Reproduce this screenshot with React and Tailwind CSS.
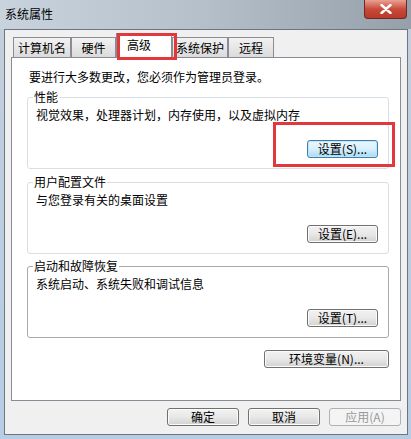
import React from 'react';

const font = "font-['Noto_Sans_CJK_SC','Noto_Sans',sans-serif]";

const Btn = ({ children, className = '', focus = false, disabled = false }) => {
    const base = "h-[18px] flex items-center justify-center rounded-[3px] border text-[12px] leading-none";
    const look = disabled
        ? "border-[#adb2b5] bg-[#f4f4f4] text-[#9a9a9a]"
        : focus
            ? "border-[#3c7fb1] bg-gradient-to-b from-[#eaf6fd] via-[#d9f0fc] to-[#a7d9f5] text-black shadow-[inset_0_0_0_1px_#c4e5f6]"
            : "border-[#707070] bg-gradient-to-b from-[#f2f2f2] via-[#e8e8e8] to-[#d2d2d2] text-black shadow-[inset_0_0_0_1px_#fbfbfb]";
    return <div className={`${base} ${look} ${className}`}>{children}</div>;
};

const Group = ({ title, text, btn, focus, className = '', dark = false }) => (
    <fieldset className={`flex flex-col rounded-[3px] border ${dark ? 'border-[#a9a9a9]' : 'border-[#d5dfe5]'} pb-[10px] ${className}`}>
        <legend className="ml-[5px] px-[1px] text-[12px] leading-[16px]">{title}</legend>
        <div className="mt-[2px] pl-[8px] text-[12px] leading-[16px]">{text}</div>
        <Btn focus={focus} className="mt-[17px] mr-[10px] self-end w-[71px]">{btn}</Btn>
    </fieldset>
);

const Tab = ({ label, w }) => (
    <div className={`h-[20px] ${w} flex items-center justify-center border border-b-0 border-[#898c95] bg-gradient-to-b from-[#f2f2f2] to-[#dbdbdb] text-[12px]`}>
        {label}
    </div>
);

export default function App() {
    return (
        <div className={`relative w-[411px] h-[439px] overflow-hidden flex flex-col bg-gradient-to-b from-[#c3cfdb] to-[#b6cde6] text-black ${font}`}>
            {/* title bar */}
            <div className="h-[29px] flex items-start justify-between bg-gradient-to-r from-[#c8d3de] via-[#b5bfca] to-[#96a0ab]">
                <span className="pl-[5px] pt-[6px] text-[12px] leading-[16px]">系统属性</span>
                <div className="mr-[4px] w-[43px] h-[19px] flex items-center justify-center rounded-b-[4px] border border-t-0 border-[#6b2a25] bg-gradient-to-b from-[#e8a194] via-[#c9493a] to-[#b73a2a]">
                    <svg width="12" height="10" viewBox="0 0 12 10">
                        <path d="M1.5 1 L10.5 9 M10.5 1 L1.5 9" stroke="#fff" strokeWidth="2.4" strokeLinecap="round" />
                    </svg>
                </div>
            </div>

            {/* dialog body */}
            <div className="mx-[4px] mr-[3px] h-[406px] flex flex-col border border-[#6d7580] bg-[#f0f0f0] px-[6px] pt-[3px]">
                <div className="h-[24px] flex items-end pl-[2px]">
                    <Tab label="计算机名" w="w-[58px]" />
                    <Tab label="硬件" w="w-[45px]" />
                    <div className="relative z-10 -mb-px h-[25px] w-[56px] flex items-center pl-[10px] pb-[2px] border border-b-0 border-[#898c95] bg-white text-[12px]">
                        高级
                    </div>
                    <Tab label="系统保护" w="w-[56px]" />
                    <Tab label="远程" w="w-[46px]" />
                </div>

                <div className="h-[344px] flex flex-col border border-[#898c95] bg-white pl-[15px] pr-[11px] pt-[11px]">
                    <div className="ml-[2px] text-[12px] leading-[16px]">要进行大多数更改，您必须作为管理员登录。</div>
                    <Group className="mt-[4px]" title="性能" text="视觉效果，处理器计划，内存使用，以及虚拟内存" btn="设置(S)..." focus />
                    <Group className="mt-[5px]" title="用户配置文件" text="与您登录有关的桌面设置" btn="设置(E)..." />
                    <Group className="mt-[4px]" title="启动和故障恢复" text="系统启动、系统失败和调试信息" btn="设置(T)..." dark />
                    <Btn className="mt-[12px] self-end w-[125px]">环境变量(N)...</Btn>
                </div>

                <div className="mt-[7px] flex justify-end gap-[9px]">
                    <Btn className="w-[72px]">确定</Btn>
                    <Btn className="w-[72px]">取消</Btn>
                    <Btn className="w-[72px]" disabled>应用(A)</Btn>
                </div>
            </div>

            {/* red annotation boxes */}
            <div className="absolute left-[117px] top-[33px] w-[60px] h-[27px] border-[3px] border-[#e2383c] z-20" />
            <div className="absolute left-[273px] top-[122px] w-[122px] h-[45px] border-[3px] border-[#e2383c] z-20" />
        </div>
    );
}
